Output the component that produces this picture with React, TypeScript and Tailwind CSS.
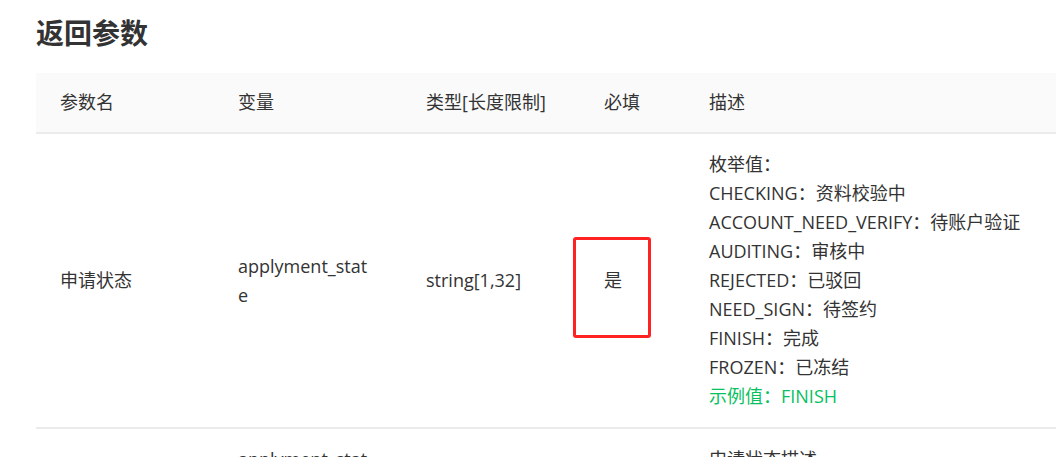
import React from "react"

interface Row {
  name: string
  field: string
  type: string
  required: string
  desc: string[]
  example: string
}

const rows: Row[] = [
  {
    name: "申请状态",
    field: "applyment_state",
    type: "string[1,32]",
    required: "是",
    desc: [
      "枚举值：",
      "CHECKING：资料校验中",
      "ACCOUNT_NEED_VERIFY：待账户验证",
      "AUDITING：审核中",
      "REJECTED：已驳回",
      "NEED_SIGN：待签约",
      "FINISH：完成",
      "FROZEN：已冻结",
    ],
    example: "示例值：FINISH",
  },
  {
    name: "申请状态描述",
    field: "applyment_state_msg",
    type: "string[1,1024]",
    required: "是",
    desc: ["申请状态描述"],
    example: "示例值：“审核中”",
  },
]

const font = { fontFamily: '"Segoe UI", "Open Sans", "Noto Sans CJK SC", sans-serif' }

export default function App() {
  return (
    <div className="relative h-[457px] w-[1056px] overflow-hidden bg-white text-[#333]" style={font}>
      <div className="pl-[36px] pt-[12px]">
        <h2 className="mb-[19px] text-[28px] font-bold leading-[42px] text-[#333]">返回参数</h2>
        <table className="w-[1100px] table-fixed border-collapse text-left text-[18px] leading-[29px]">
          <colgroup>
            <col className="w-[178px]" />
            <col className="w-[188px]" />
            <col className="w-[178px]" />
            <col className="w-[105px]" />
            <col />
          </colgroup>
          <thead>
            <tr className="h-[60px] border-b-2 border-[#ebebeb] bg-[#fafafa]">
              <th className="px-6 font-normal">参数名</th>
              <th className="px-6 font-normal">变量</th>
              <th className="px-6 font-normal">类型[长度限制]</th>
              <th className="px-6 font-normal">必填</th>
              <th className="px-6 font-normal">描述</th>
            </tr>
          </thead>
          <tbody>
            {rows.map((row) => (
              <tr key={row.field} className="border-b-2 border-[#ebebeb] align-middle">
                <td className="px-6 py-4">{row.name}</td>
                <td className="break-all py-4 pl-6 pr-[32px]">{row.field}</td>
                <td className="px-6 py-4">{row.type}</td>
                <td className="px-6 py-4">{row.required}</td>
                <td className="px-6 py-4">
                  {row.desc.map((line) => (
                    <div key={line}>{line}</div>
                  ))}
                  <div className="text-[#07c160]">{row.example}</div>
                </td>
              </tr>
            ))}
          </tbody>
        </table>
      </div>
      {/* annotation box round the required flag */}
      <div className="absolute left-[573px] top-[237px] h-[101px] w-[78px] rounded-[3px] border-[3px] border-[#ff2222]" />
    </div>
  )
}
